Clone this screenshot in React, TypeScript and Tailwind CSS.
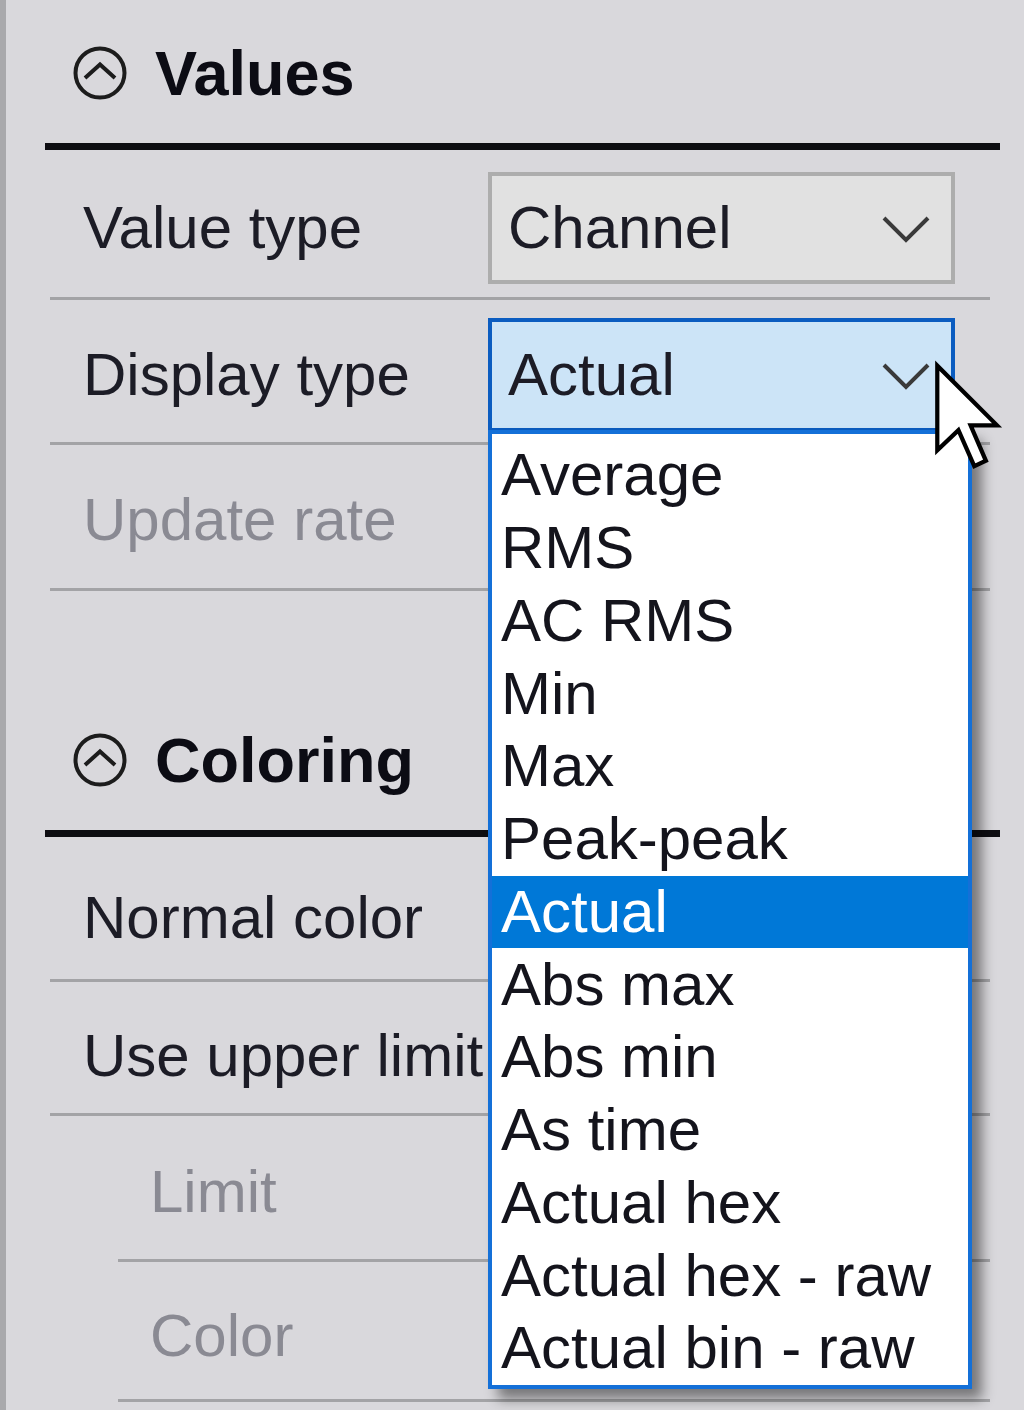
import React from 'react';

const items = [
  'Average',
  'RMS',
  'AC RMS',
  'Min',
  'Max',
  'Peak-peak',
  'Actual',
  'Abs max',
  'Abs min',
  'As time',
  'Actual hex',
  'Actual hex - raw',
  'Actual bin - raw',
];

const CollapseIcon = () => (
  <svg width="54" height="54" viewBox="0 0 54 54" fill="none" className="shrink-0">
    <circle cx="27" cy="27" r="24.5" stroke="#1c1c1c" strokeWidth="4" />
    <polyline points="12,32 27,18.5 42,32" stroke="#1c1c1c" strokeWidth="4" strokeLinejoin="miter" />
  </svg>
);

const Chevron = () => (
  <svg width="48" height="32" viewBox="0 0 48 32" fill="none" className="shrink-0">
    <polyline points="2,6 24,28 46,6" stroke="#3a3a3a" strokeWidth="4" />
  </svg>
);

const SectionHeader = ({ title, className }: { title: string; className: string }) => (
  <div className={`w-[955px] h-[150px] border-b-[7px] border-[#0e0e12] flex items-center pl-[28px] pt-[3px] gap-[28px] ${className}`}>
    <CollapseIcon />
    <span className="text-[63px] font-bold text-[#0c0c14]">{title}</span>
  </div>
);

interface RowProps {
  label: string;
  size: string;
  disabled?: boolean;
  indent?: boolean;
  children?: React.ReactNode;
}

const Row: React.FC<RowProps> = ({ label, size, disabled, indent, children }) => (
  <div
    className={`flex items-center border-b-[3px] border-[#a3a3a6] ${size} ${
      indent ? 'ml-[73px] w-[872px]' : 'ml-[5px] w-[940px]'
    }`}
  >
    <div
      className={`shrink-0 whitespace-nowrap ${indent ? 'w-[370px] pl-[32px]' : 'w-[438px] pl-[33px]'} ${
        disabled ? 'text-[#8a8a93]' : 'text-[#1c1c26]'
      }`}
    >
      {label}
    </div>
    {children}
  </div>
);

export default function App() {
  return (
    <div className="relative w-[1024px] h-[1410px] overflow-hidden bg-[#d9d8dc] border-l-[6px] border-[#a9a9ac] pl-[39px] font-['Liberation_Sans',Arial,sans-serif] text-[60px] leading-none">
      {/* Values */}
      <SectionHeader title="Values" className="" />
      <Row label="Value type" size="h-[150px] pt-[9px]">
        <div className="w-[467px] h-[112px] border-[4px] border-[#adadad] bg-[#e1e1e1] flex items-center justify-between pl-[16px] pr-[21px] text-[#1c1c26]">
          <span>Channel</span>
          <Chevron />
        </div>
      </Row>
      <Row label="Display type" size="h-[145px] pt-[8px]">
        <div className="w-[467px] h-[114px] border-[4px] border-[#0b5cc0] bg-[#cce4f7] flex items-center justify-between pl-[16px] pr-[21px] text-[#1c1c26]">
          <span>Actual</span>
          <Chevron />
        </div>
      </Row>
      <Row label="Update rate" size="h-[146px] pt-[7px]" disabled />

      {/* Coloring */}
      <SectionHeader title="Coloring" className="mt-[96px]" />
      <Row label="Normal color" size="h-[145px] pt-[19px]" />
      <Row label="Use upper limit" size="h-[134px] pt-[17px]" />
      <Row label="Limit" size="h-[146px] pt-[9px]" disabled indent />
      <Row label="Color" size="h-[140px] pt-[11px]" disabled indent />

      {/* open dropdown list */}
      <div className="absolute left-[482px] top-[430px] w-[484px] bg-white border-[4px] border-[#1470d8] pt-[5px] shadow-[10px_10px_12px_rgba(0,0,0,0.45)]">
        {items.map((item, idx) => (
          <div
            key={item}
            className={`h-[72.75px] flex items-center pl-[9px] whitespace-nowrap ${
              idx === 6 ? 'bg-[#0078d7] text-white' : 'text-[#14141c]'
            }`}
          >
            {item}
          </div>
        ))}
      </div>

      {/* mouse cursor */}
      <svg
        className="absolute left-[926px] top-[360px]"
        width="74"
        height="117"
        viewBox="-1 -1 14 22"
      >
        <polygon
          points="0,0 0,16 4,12.2 7,19 9.2,18 6.3,11.3 11.3,11.3"
          fill="white"
          stroke="black"
          strokeWidth="0.8"
          strokeLinejoin="miter"
        />
      </svg>
    </div>
  );
}
